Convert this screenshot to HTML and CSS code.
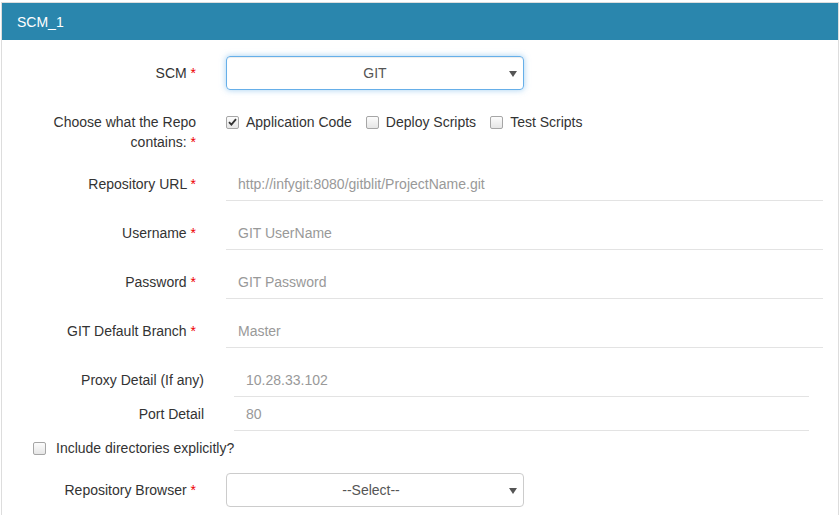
FILE: index.html
```html
<!DOCTYPE html>
<html>
<head>
<meta charset="utf-8">
<link rel="stylesheet" href="styles.css">
</head>
<body>
<div class="panel">
  <div class="panel-heading">SCM_1</div>
  <div class="panel-body">
    <div class="row row-select">
      <label class="lbl">SCM <span class="req">*</span></label>
      <div class="select focused"><span class="sel-text">GIT</span><svg class="caret" width="8" height="6" viewBox="0 0 8 6"><path d="M0 0H8L4 6Z" fill="#555"/></svg></div>
    </div>
    <div class="row row-checks">
      <label class="lbl">Choose what the Repo contains:&nbsp;<span class="req">*</span></label>
      <div class="checks">
        <span class="check"><span class="cb checked"><svg width="9" height="8" viewBox="0 0 9 8"><path d="M1 4.2L3.4 6.6L8 1.2" stroke="#333" stroke-width="1.8" fill="none"/></svg></span>Application Code</span>
        <span class="check"><span class="cb"></span>Deploy Scripts</span>
        <span class="check"><span class="cb"></span>Test Scripts</span>
      </div>
    </div>
    <div class="row row-input">
      <label class="lbl">Repository URL <span class="req">*</span></label>
      <input class="line" type="text" placeholder="http://infygit:8080/gitblit/ProjectName.git">
    </div>
    <div class="row row-input">
      <label class="lbl">Username <span class="req">*</span></label>
      <input class="line" type="text" placeholder="GIT UserName">
    </div>
    <div class="row row-input">
      <label class="lbl">Password <span class="req">*</span></label>
      <input class="line" type="text" placeholder="GIT Password">
    </div>
    <div class="row row-input">
      <label class="lbl">GIT Default Branch <span class="req">*</span></label>
      <input class="line" type="text" placeholder="Master">
    </div>
    <div class="proxy">
      <div class="row row-proxy">
        <label class="lbl">Proxy Detail (If any)</label>
        <input class="line" type="text" value="10.28.33.102">
      </div>
      <div class="row row-proxy">
        <label class="lbl">Port Detail</label>
        <input class="line" type="text" value="80">
      </div>
    </div>
    <div class="include">
      <span class="check"><span class="cb"></span>Include directories explicitly?</span>
    </div>
    <div class="row row-select last">
      <label class="lbl">Repository Browser <span class="req">*</span></label>
      <div class="select"><span class="sel-text">--Select--</span><svg class="caret" width="8" height="6" viewBox="0 0 8 6"><path d="M0 0H8L4 6Z" fill="#555"/></svg></div>
    </div>
  </div>
</div>
</body>
</html>
```
FILE: styles.css
```css
* { box-sizing: border-box; }
html, body { margin: 0; padding: 0; background: #fff; }
body {
  font-family: "Liberation Sans", Arial, Helvetica, sans-serif;
  font-size: 14px;
  line-height: 20px;
  color: #333;
  overflow: hidden;
}
.panel {
  margin: 2px 1px 0 1px;
  border: 1px solid #ddd;
  border-bottom: none;
  height: 520px;
}
.panel-heading {
  background: #2a86ad;
  color: #fff;
  height: 37px;
  padding: 9px 15px 0 15px;
  line-height: 20px;
}
.panel-body {
  padding: 16px 15px 0 15px;
}
.row {
  display: grid;
  grid-template-columns: 179px 1fr;
  column-gap: 30px;
  align-items: center;
}
.lbl {
  text-align: right;
  color: #333;
}
.req { color: #e00; }
.row-select { height: 34px; }
.row-select .select { width: 298px; }
.select {
  height: 34px;
  border: 1px solid #ccc;
  border-radius: 4px;
  display: flex;
  align-items: center;
  position: relative;
  justify-content: center;
  color: #555;
}
.select.focused {
  border-color: #66afe9;
  box-shadow: inset 0 1px 1px rgba(0,0,0,.075), 0 0 6px rgba(102,175,233,.6);
}
.sel-text { color: #555; }
.last .sel-text { margin-right: 8px; }
.caret {
  position: absolute;
  right: 6px;
  top: 14px;
}
.row-checks {
  margin-top: 22px;
  align-items: start;
}
.checks {
  display: flex;
  gap: 14px;
}
.check {
  display: inline-flex;
  align-items: center;
  color: #333;
}
.cb {
  width: 13px;
  height: 13px;
  border: 1px solid #a6a6a6;
  border-radius: 2px;
  background: linear-gradient(#fcfcfc, #e6e6e6);
  margin-right: 7px;
  display: inline-flex;
  align-items: center;
  justify-content: center;
}
.row-input { margin-top: 15px; }
.row-checks + .row-input { margin-top: 15px; }
input.line {
  font-family: inherit;
  font-size: 14px;
  height: 34px;
  border: none;
  border-bottom: 1px solid #e3e3e3;
  padding: 6px 12px;
  outline: none;
  background: transparent;
  color: #999;
  width: 100%;
}
input.line::placeholder { color: #999; }
.proxy {
  margin-top: 15px;
  padding: 0 14px 0 8px;
}
.row-proxy {
  grid-template-columns: 179px 1fr;
}
.include {
  padding-left: 16px;
  margin-top: 7px;
  height: 20px;
}
.include .cb { margin-right: 10px; }
.row-select.last { margin-top: 15px; }
.row-select.last .select { width: 298px; }
```
